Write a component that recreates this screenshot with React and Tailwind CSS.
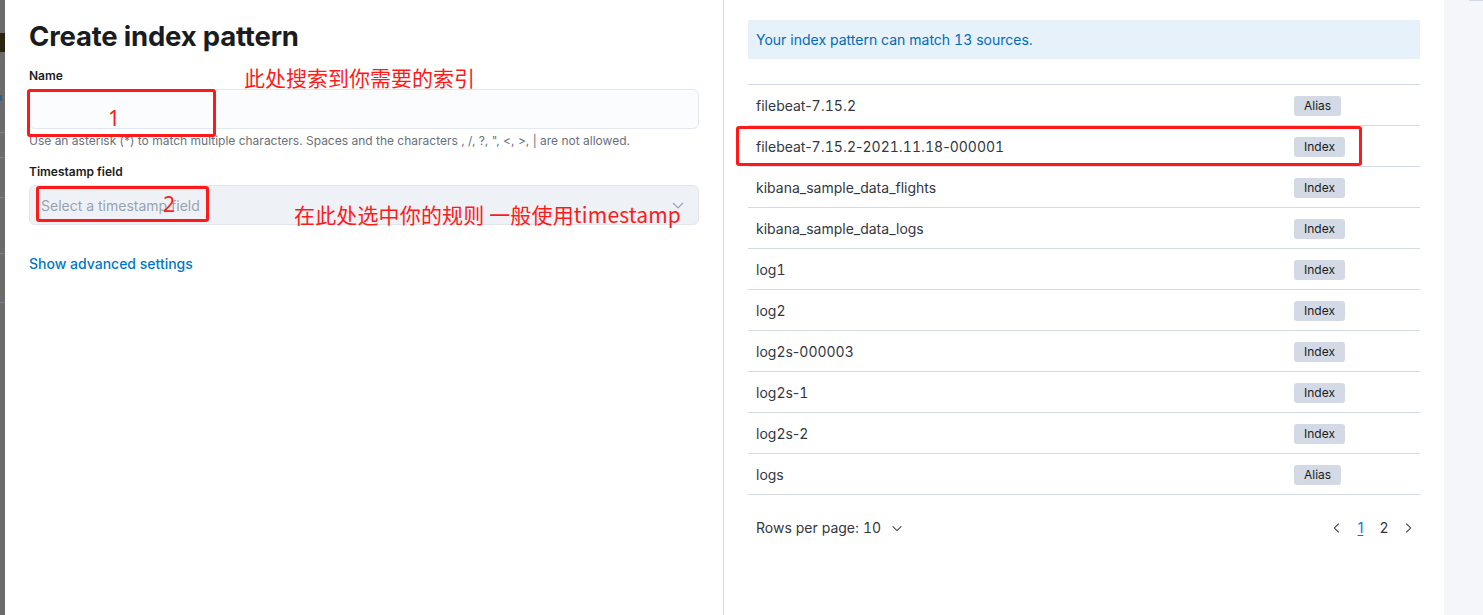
import React from "react";

const rows = [
  ["filebeat-7.15.2", "Alias"],
  ["filebeat-7.15.2-2021.11.18-000001", "Index"],
  ["kibana_sample_data_flights", "Index"],
  ["kibana_sample_data_logs", "Index"],
  ["log1", "Index"],
  ["log2", "Index"],
  ["log2s-000003", "Index"],
  ["log2s-1", "Index"],
  ["log2s-2", "Index"],
  ["logs", "Alias"],
];

function Nums({ text }) {
  return text.split(/(\d+)/).map((part, i) =>
    /^\d+$/.test(part) ? (
      <span key={i} className="tabular-nums">
        {part}
      </span>
    ) : (
      <span key={i}>{part}</span>
    )
  );
}

function Chevron({ className, dir = "down" }) {
  const d =
    dir === "down"
      ? "M3 6l5 5 5-5"
      : dir === "left"
      ? "M10 3L5 8l5 5"
      : "M6 3l5 5-5 5";
  return (
    <svg viewBox="0 0 16 16" className={className} fill="none" stroke="currentColor" strokeWidth="1.2">
      <path d={d} />
    </svg>
  );
}

export default function App() {
  return (
    <div
      className="relative flex h-[615px] w-[1483px] overflow-hidden bg-white text-[#343741]"
      style={{ fontFamily: "Inter, 'Noto Sans', sans-serif" }}
    >
      {/* dimmed page behind the flyout */}
      <div className="relative w-[5px] shrink-0 bg-[#6c6c6c]">
        <div className="absolute left-0 top-[33px] h-[19px] w-[5px] bg-[#2a2410]" />
        <div className="absolute left-0 top-[95px] h-[6px] w-[2px] bg-[#2d5f8a]" />
        <div className="absolute left-0 top-[132px] h-px w-[5px] bg-[#7a7f8a]" />
        <div className="absolute left-0 top-[157px] h-px w-[5px] bg-[#7a7f8a]" />
        <div className="absolute left-0 top-[197px] h-px w-[5px] bg-[#7a7f8a]" />
        <div className="absolute left-0 top-[253px] h-px w-[5px] bg-[#7a7f8a]" />
        <div className="absolute left-0 top-[302px] h-px w-[5px] bg-[#7a7f8a]" />
      </div>

      {/* left column */}
      <div className="relative w-[719px] shrink-0 border-r border-[#d3dae6] px-6 pt-[19px]">
        <h1 className="text-[27.5px] font-bold leading-[34px] tracking-[-0.2px] text-[#1a1c21]">
          Create index pattern
        </h1>

        <div className="mt-[15px] text-[12px] font-semibold leading-[16px] text-[#1a1c21]">Name</div>
        <div className="mt-[5px] h-[40px] rounded-[6px] border border-[#e3e8f0] bg-[#fbfcfd]" />
        <div className="mt-[4px] text-[12px] leading-[16px] text-[#69707d]">
          Use an asterisk (*) to match multiple characters. Spaces and the characters , /, ?, ", &lt;, &gt;, | are not allowed.
        </div>

        <div className="mt-[15px] text-[12px] font-semibold leading-[16px] text-[#1a1c21]">Timestamp field</div>
        <div className="mt-[5px] flex h-[40px] items-center justify-between rounded-[6px] border border-[#e1e6ee] bg-[#eef2f7] pl-[11px] pr-[12px]">
          <span className="text-[14px] text-[#98a2b3]">Select a timestamp field</span>
          <Chevron className="h-[16px] w-[16px] text-[#98a2b3]" />
        </div>

        <div className="mt-[29px] text-[14px] font-medium leading-[20px] text-[#0077cc]">Show advanced settings</div>

        {/* annotations */}
        <div className="absolute left-[22px] top-[89px] h-[48px] w-[189px] rounded-[3px] border-[3px] border-[#ff1a1a]" />
        <div
          className="absolute left-[103px] top-[105px] text-[21px] leading-[26px] text-[#ff1a1a]"
          style={{ fontFamily: "'Noto Sans', sans-serif" }}
        >
          1
        </div>
        <div
          className="absolute left-[239px] top-[63px] text-[21px] leading-[28px] text-[#ff1a1a]"
          style={{ fontFamily: "'Noto Sans CJK SC', sans-serif" }}
        >
          此处搜索到你需要的索引
        </div>
        <div className="absolute left-[31px] top-[186px] h-[36px] w-[173px] rounded-[3px] border-[3px] border-[#ff1a1a]" />
        <div
          className="absolute left-[158px] top-[191px] text-[21px] leading-[26px] text-[#ff1a1a]"
          style={{ fontFamily: "'Noto Sans', sans-serif" }}
        >
          2
        </div>
        <div
          className="absolute left-[289px] top-[200px] text-[21px] leading-[28px] tracking-[0.15px] text-[#ff1a1a]"
          style={{ fontFamily: "'Noto Sans CJK SC', sans-serif" }}
        >
          在此处选中你的规则 一般使用timestamp
        </div>
      </div>

      {/* right column */}
      <div className="relative w-[720px] shrink-0 px-6 pt-[20px]">
        <div className="flex h-[39px] items-center bg-[#e6f1fa] px-2 text-[14px] text-[#006bb8]">
          <span>
            Your index pattern can match <span className="tabular-nums">13</span> sources.
          </span>
        </div>

        <div className="mt-[25px] border-t border-[#d3dae6]">
          {rows.map(([name, type]) => (
            <div key={name} className="flex h-[41px] items-center border-b border-[#d3dae6] px-2 text-[14px]">
              <span className="flex-1 text-[#343741]">
                <Nums text={name} />
              </span>
              <span className="mr-[60px] w-[58px]">
                <span className="inline-block rounded-[3px] bg-[#d3dae6] px-[10px] text-[12px] leading-[20px] text-[#1a1c21]">
                  {type}
                </span>
              </span>
            </div>
          ))}
        </div>

        <div className="mt-[22px] flex items-center justify-between pl-2 text-[14px]">
          <div className="flex items-center gap-[9px] text-[#343741]">
            <span>
              Rows per page: <span className="tabular-nums">10</span>
            </span>
            <Chevron className="h-[14px] w-[14px]" />
          </div>
          <div className="flex items-center text-[14px] text-[#343741]">
            <span className="flex w-[24px] justify-center">
              <Chevron dir="left" className="h-[14px] w-[14px]" />
            </span>
            <span className="flex w-[23px] justify-center text-[#0077cc] underline underline-offset-2">1</span>
            <span className="flex w-[24px] justify-center">2</span>
            <span className="flex w-[24px] justify-center">
              <Chevron dir="right" className="h-[14px] w-[14px]" />
            </span>
          </div>
        </div>

        <div className="absolute left-[12px] top-[126px] h-[40px] w-[626px] rounded-[3px] border-[3px] border-[#ff1a1a]" />
      </div>

      {/* gray edge */}
      <div className="relative flex-1 bg-[#f4f6f9]">
        <div className="absolute right-0 top-0 h-px w-[14px] bg-[#d3dae6]" />
      </div>
    </div>
  );
}
